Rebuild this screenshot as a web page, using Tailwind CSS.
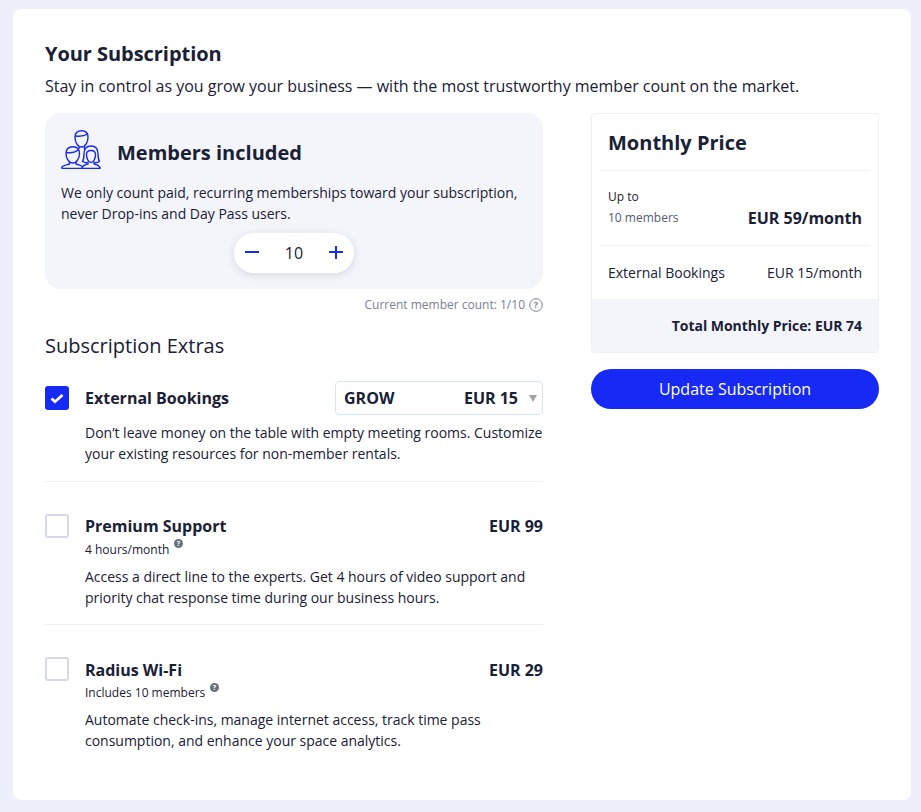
<!DOCTYPE html>
<html lang="en">
<head>
    <meta charset="UTF-8">
    <meta name="viewport" content="width=device-width, initial-scale=1.0">
    <title>Your Subscription</title>
    <script src="https://cdn.jsdelivr.net/npm/@tailwindcss/browser@4"></script>
</head>
<body class="bg-[#edf0fa] h-[812px] overflow-hidden p-[9px_10px_12px_13px] font-['Open_Sans',sans-serif] text-[#1a2035]">
    <div class="bg-white rounded-[8px] h-[791px] px-[32px] pt-[32px]">
        <h1 class="text-[20px] leading-[26px] font-bold tracking-[-0.05px]">Your Subscription</h1>
        <p class="text-[16px] leading-[24px] mt-[7px] whitespace-nowrap tracking-[-0.01px]">Stay in control as you grow your business — with the most trustworthy member count on the market.</p>

        <div class="flex mt-[15px]">
            <!-- left column -->
            <div class="w-[498px]">
                <div class="bg-[#f4f5fb] rounded-[16px] h-[176px] px-[16px] pt-[16px]">
                    <div class="flex items-start gap-[16px] h-[40px]">
                        <svg class="w-[40px] h-[40px]" viewBox="3 3 40 40" fill="none" stroke="#1729f5" stroke-width="1.400" stroke-linejoin="round" stroke-linecap="round">
                            <!-- back head -->
                            <path d="M17 11C17 7 19.500 4.700 23.500 4.700S30 7 30 11C30 16 27.500 21 23.500 21S17 16 17 11z"/>
                            <path d="M17.500 10c4 .5 9 0 12-2"/>
                            <path d="M21 20.500v2M26.500 20v3"/>
                            <!-- left head -->
                            <path d="M8 27.500C8 23 10.500 20.700 14.800 20.700S21.500 23 21.500 27.500C21.500 32 19 37 14.800 37S8 32 8 27.500z"/>
                            <path d="M8.500 26.500c4 .5 8.500 0 11.500-2.500"/>
                            <path d="M11.500 36v2c-3 1-7 1.500-7.800 3.500 0 .5.500 1 1.500 1h19M18 36v2c2 .5 4 1 6.500 2.500"/>
                            <!-- right head with long hair -->
                            <path d="M26 28c0-5 2.500-8 7-8s7 3 7 8c0 3.500.5 6 1.500 7.500-1.500 1-3 1.200-4.500 1.200M26 28c0 3.500-.5 6-1.500 7.500 1.500 1 3 1.200 4.500 1.200"/>
                            <path d="M28.500 28.500c0-2.500 2-4 4.500-4s4.500 1.500 4.500 4c0 4-2 8-4.500 8s-4.500-4-4.500-8z"/>
                            <path d="M30 36v2c-2 .5-5 1.500-6 3.500 0 .5.500 1 1.500 1h16c.5 0 1-.5.500-1-1-2-4-3-6-3.500v-2"/>
                        </svg>
                        <h2 class="text-[20px] leading-[28px] font-bold mt-[10px]">Members included</h2>
                    </div>
                    <p class="text-[14px] leading-[21px] mt-[13px] tracking-[-0.01px]">We only count paid, recurring memberships toward your subscription,<br>never Drop-ins and Day Pass users.</p>
                    <div class="flex justify-center mt-[9px]">
                        <div class="bg-white rounded-full w-[120px] h-[40px] shadow-[0_2px_8px_rgba(30,40,90,0.14)] flex items-center justify-between px-[11px]">
                            <svg class="w-[14px] h-[14px]" viewBox="0 0 14 14" stroke="#1729f5" stroke-width="2"><path d="M0 6h14"/></svg>
                            <span class="text-[16px] leading-[24px]">10</span>
                            <svg class="w-[14px] h-[14px]" viewBox="0 0 14 14" stroke="#1729f5" stroke-width="2"><path d="M0 6h14M7 -1v14"/></svg>
                        </div>
                    </div>
                </div>
                <div class="flex justify-end items-center gap-[4px] mt-[8px] h-[16px] text-[12px] text-[#7c8095]">
                    <span>Current member count: 1/10</span>
                    <svg class="w-[14px] h-[14px]" viewBox="0 0 14 14" fill="none"><circle cx="7" cy="7" r="6.300" stroke="#7c8095"/><text x="7" y="10" text-anchor="middle" font-size="9" font-weight="700" fill="#7c8095" font-family="Open Sans">?</text></svg>
                </div>

                <h2 class="text-[20px] leading-[28px] mt-[19px]">Subscription Extras</h2>

                <!-- External Bookings -->
                <div class="mt-[20px] border-b border-[#edf0f7] h-[102px]">
                    <div class="flex items-center h-[36px]">
                        <span class="w-[24px] h-[24px] rounded-[3px] bg-[#1729f5] flex items-center justify-center">
                            <svg class="w-[14px] h-[12px] mt-[2px]" viewBox="0 0 14 12" fill="none" stroke="#fff" stroke-width="2.800"><path d="M1.500 5.500l3.500 3.200 7.500-6.700"/></svg>
                        </span>
                        <span class="ml-[16px] text-[16px] leading-[24px] font-bold">External Bookings</span>
                        <div class="ml-auto w-[208px] h-[34px] border border-[#d8e6f4] rounded-[4px] flex items-center pl-[8px] pr-[5px] text-[16px] font-bold">
                            <span>GROW</span>
                            <span class="ml-auto">EUR 15</span>
                            <span class="ml-[11px] w-0 h-0 border-x-[4px] border-x-transparent border-t-[7px] border-t-[#a3a3a3]"></span>
                        </div>
                    </div>
                    <p class="text-[14px] leading-[21px] ml-[40px] mt-[6px] whitespace-nowrap tracking-[-0.01px]">Don’t leave money on the table with empty meeting rooms. Customize<br>your existing resources for non-member rentals.</p>
                </div>

                <!-- Premium Support -->
                <div class="mt-[32px] border-b border-[#edf0f7] h-[111px] flex">
                    <span class="w-[24px] h-[24px] rounded-[3px] bg-white border-2 border-[#d6d8ec] shrink-0"></span>
                    <div class="ml-[16px] flex-1">
                        <div class="flex justify-between text-[16px] leading-[24px] font-bold">
                            <span>Premium Support</span>
                            <span>EUR 99</span>
                        </div>
                        <div class="flex text-[12px] leading-[18px] mt-[3px]">
                            <span>4 hours/month</span>
                            <svg class="w-[9px] h-[9px] ml-[5px] mt-[-2px]" viewBox="0 0 9 9"><circle cx="4.500" cy="4.500" r="4.500" fill="#6b6f80"/><text x="4.500" y="7.300" text-anchor="middle" font-size="7" font-weight="700" fill="#fff" font-family="Open Sans">?</text></svg>
                        </div>
                        <p class="text-[14px] leading-[21px] mt-[7px] whitespace-nowrap tracking-[-0.01px]">Access a direct line to the experts. Get 4 hours of video support and<br>priority chat response time during our business hours.</p>
                    </div>
                </div>

                <!-- Radius Wi-Fi -->
                <div class="mt-[33px] flex">
                    <span class="w-[24px] h-[24px] rounded-[3px] bg-white border-2 border-[#d6d8ec] shrink-0 mt-[-1px]"></span>
                    <div class="ml-[16px] flex-1">
                        <div class="flex justify-between text-[16px] leading-[24px] font-bold">
                            <span>Radius Wi-Fi</span>
                            <span>EUR 29</span>
                        </div>
                        <div class="flex text-[12px] leading-[18px] mt-[2px]">
                            <span>Includes 10 members</span>
                            <svg class="w-[9px] h-[9px] ml-[5px] mt-[-1px]" viewBox="0 0 9 9"><circle cx="4.500" cy="4.500" r="4.500" fill="#6b6f80"/><text x="4.500" y="7.300" text-anchor="middle" font-size="7" font-weight="700" fill="#fff" font-family="Open Sans">?</text></svg>
                        </div>
                        <p class="text-[14px] leading-[21px] mt-[7px] whitespace-nowrap tracking-[-0.01px]">Automate check-ins, manage internet access, track time pass<br>consumption, and enhance your space analytics.</p>
                    </div>
                </div>
            </div>

            <!-- right column -->
            <div class="w-[288px] ml-[48px]">
                <div class="border border-[#edf0f7] rounded-[4px] overflow-hidden h-[240px]">
                    <div class="mx-[8px] h-[57px] border-b border-[#edf0f7] px-[8px] pt-[14px]">
                        <h2 class="text-[20px] leading-[30px] font-bold">Monthly Price</h2>
                    </div>
                    <div class="mx-[8px] h-[75px] border-b border-[#edf0f7] px-[8px] pt-[15px] flex justify-between">
                        <div class="text-[12px] leading-[21px]">
                            <div>Up to</div>
                            <div class="text-[#555a6e]">10 members</div>
                        </div>
                        <div class="text-[16px] font-bold mt-[20px] leading-[24px]">EUR 59/month</div>
                    </div>
                    <div class="mx-[8px] h-[53px] px-[8px] flex justify-between items-center text-[14px]">
                        <span>External Bookings</span>
                        <span>EUR 15/month</span>
                    </div>
                    <div class="bg-[#f4f5fb] h-[53px] flex items-center justify-end pr-[16px] text-[14px] font-bold tracking-[-0.04px]">Total Monthly Price: EUR 74</div>
                </div>
                <button class="mt-[16px] w-full h-[40px] rounded-full bg-[#1729f5] text-white text-[16px] font-medium">Update Subscription</button>
            </div>
        </div>
    </div>
</body>
</html>
